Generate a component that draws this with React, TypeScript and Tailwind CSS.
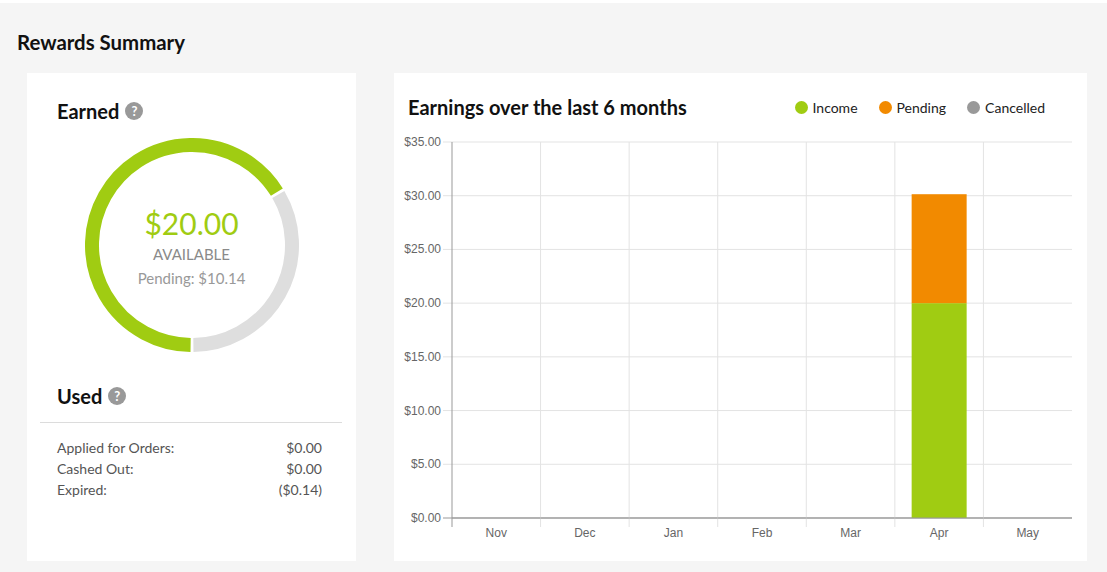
import React from "react";

const GREEN = "#a0cc12";
const ORANGE = "#f28a00";
const GREY = "#999999";

// chart geometry, in svg coordinates
const X0 = 58;
const X1 = 678;
const Y0 = 14;
const Y1 = 390;
const MONTHS = ["Nov", "Dec", "Jan", "Feb", "Mar", "Apr", "May"];
const TICKS = [35, 30, 25, 20, 15, 10, 5, 0];
const DATA: Record<string, { income: number; pending: number }> = {
  Apr: { income: 20, pending: 10.14 },
};

const yOf = (v: number) => Y1 - (v / 35) * (Y1 - Y0);
const colW = (X1 - X0) / MONTHS.length;

function arc(cx: number, cy: number, r: number, a0: number, a1: number) {
  const p = (a: number) => {
    const rad = (a * Math.PI) / 180;
    return [cx + r * Math.sin(rad), cy - r * Math.cos(rad)];
  };
  const [sx, sy] = p(a0);
  const [ex, ey] = p(a1);
  const large = a1 - a0 > 180 ? 1 : 0;
  return `M ${sx} ${sy} A ${r} ${r} 0 ${large} 1 ${ex} ${ey}`;
}

function Help() {
  return (
    <span className="inline-flex h-[18px] w-[18px] items-center justify-center rounded-full bg-[#999] text-[13px] font-bold leading-none text-white">
      ?
    </span>
  );
}

function Donut() {
  const earned = 20;
  const pending = 10.14;
  const split = 180 + (earned / (earned + pending)) * 360;
  return (
    <div className="relative mx-auto mt-[13px] h-[214px] w-[214px]">
      <svg width="214" height="214" viewBox="0 0 214 214">
        <path d={arc(107, 107, 100, 180.8, split - 0.8)} fill="none" stroke={GREEN} strokeWidth="14" />
        <path d={arc(107, 107, 100, split + 0.8, 539.2)} fill="none" stroke="#dedede" strokeWidth="14" />
      </svg>
      <div className="absolute inset-x-0 top-[67px] flex flex-col items-center">
        <div className="text-[30px] leading-9 text-[#a0cc12]">$20.00</div>
        <div className="mt-[1px] text-[15px] leading-6 text-[#8a8a8a]">AVAILABLE</div>
        <div className="text-[15px] leading-6 text-[#999]">Pending: $10.14</div>
      </div>
    </div>
  );
}

function Row({ label, value }: { label: string; value: string }) {
  return (
    <div className="flex justify-between text-[14px] leading-[21px] text-[#555]">
      <span>{label}</span>
      <span>{value}</span>
    </div>
  );
}

function LegendItem({ color, label }: { color: string; label: string }) {
  return (
    <div className="flex items-center gap-[5px]">
      <span className="h-[13px] w-[13px] rounded-full" style={{ backgroundColor: color }} />
      <span className="text-[14px] text-[#222]">{label}</span>
    </div>
  );
}

function Chart() {
  return (
    <svg width="693" height="420" className="mt-[7px] block" style={{ fontFamily: "'Liberation Sans', Arial, sans-serif" }}>
      {TICKS.map((t) => (
        <g key={t}>
          <line x1={X0 - 9} x2={X1} y1={yOf(t)} y2={yOf(t)} stroke={t === 0 ? "#999" : "#e3e3e3"} strokeWidth="1" />
          <text x={X0 - 11} y={yOf(t) + 4} textAnchor="end" fontSize="12" fill="#666">
            ${t.toFixed(2)}
          </text>
        </g>
      ))}
      {MONTHS.map((m, i) => {
        const x = X0 + colW * (i + 1);
        return i < MONTHS.length - 1 ? (
          <line key={m} x1={x} x2={x} y1={Y0} y2={Y1 + 9} stroke="#e3e3e3" strokeWidth="1" />
        ) : null;
      })}
      {MONTHS.map((m, i) => {
        const cx = X0 + colW * (i + 0.5);
        const d = DATA[m];
        return (
          <g key={m}>
            {d ? (
              <>
                <rect x={cx - 27.5} width="55" y={yOf(d.income)} height={Y1 - yOf(d.income)} fill={GREEN} />
                <rect
                  x={cx - 27.5}
                  width="55"
                  y={yOf(d.income + d.pending)}
                  height={yOf(d.income) - yOf(d.income + d.pending)}
                  fill={ORANGE}
                />
              </>
            ) : null}
            <text x={cx} y={Y1 + 19} textAnchor="middle" fontSize="12" fill="#666">
              {m}
            </text>
          </g>
        );
      })}
      <line x1={X0} x2={X0} y1={Y0} y2={Y1 + 9} stroke="#999" strokeWidth="1" />
      <line x1={X0} x2={X1} y1={Y1} y2={Y1} stroke="#999" strokeWidth="1" />
    </svg>
  );
}

export default function App() {
  return (
    <div className="min-h-screen border-t-[3px] border-white bg-[#f5f5f5] font-['Lato','Open_Sans',sans-serif]">
      <h1 className="mt-[25px] pl-[17px] text-[20.4px] font-bold leading-7 text-[#111]">Rewards Summary</h1>
      <div className="mt-[17px] flex gap-[38px] pl-[27px]">
        <section className="h-[488px] w-[329px] bg-white pt-[24px]">
          <h2 className="flex items-center gap-[6px] pl-[30px] text-[20px] font-bold leading-7 text-[#111]">
            Earned <Help />
          </h2>
          <Donut />
          <h2 className="mt-[30px] flex items-center gap-[6px] pl-[30px] text-[20px] font-bold leading-7 text-[#111]">
            Used <Help />
          </h2>
          <div className="mx-[13px] mt-[12px] mr-[14px] border-t border-[#dcdcdc]" />
          <div className="mt-[14px] pl-[30px] pr-[34px]">
            <Row label="Applied for Orders:" value="$0.00" />
            <Row label="Cashed Out:" value="$0.00" />
            <Row label="Expired:" value="($0.14)" />
          </div>
        </section>
        <section className="h-[488px] w-[693px] bg-white pt-[20px]">
          <div className="flex items-center justify-between pl-[14px] pr-[42px]">
            <h2 className="text-[20px] font-bold leading-7 text-[#111]">Earnings over the last 6 months</h2>
            <div className="flex items-center gap-[21px]">
              <LegendItem color={GREEN} label="Income" />
              <LegendItem color={ORANGE} label="Pending" />
              <LegendItem color={GREY} label="Cancelled" />
            </div>
          </div>
          <Chart />
        </section>
      </div>
    </div>
  );
}
